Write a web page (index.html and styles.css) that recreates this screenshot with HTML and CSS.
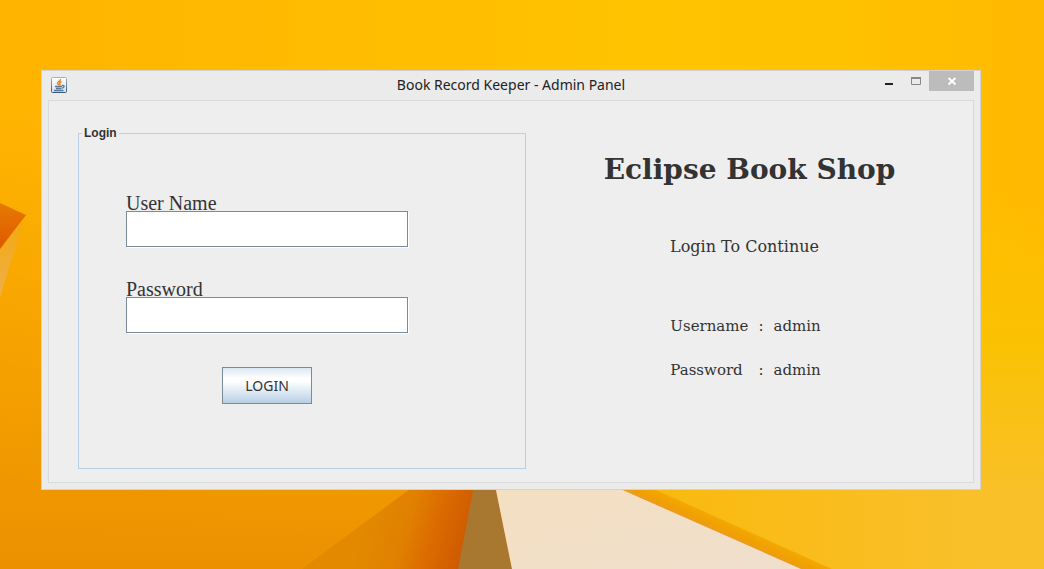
FILE: index.html
```html
<!DOCTYPE html>
<html lang="en">
<head>
<meta charset="utf-8">
<meta name="viewport" content="width=device-width, initial-scale=1">
<title>Book Record Keeper - Admin Panel</title>
<link rel="stylesheet" href="styles.css">
</head>
<body class="desktop">
<svg class="wallpaper" viewBox="0 0 1044 569" preserveAspectRatio="none" aria-hidden="true">
  <defs>
    <linearGradient id="sky" x1="0" y1="0" x2="1" y2="0">
      <stop offset="0" stop-color="#ffb400"/><stop offset=".6" stop-color="#ffc300"/>
      <stop offset=".8" stop-color="#ffc200"/><stop offset="1" stop-color="#ffb900"/>
    </linearGradient>
    <linearGradient id="shade" x1="0" y1="0" x2="0" y2="1">
      <stop offset=".2" stop-color="#ee9200" stop-opacity="0"/><stop offset="1" stop-color="#ec9000"/>
    </linearGradient>
    <linearGradient id="sand" x1="0" y1="0" x2="0" y2="1">
      <stop offset="0" stop-color="#fbc400" stop-opacity="0"/><stop offset=".4" stop-color="#fac204"/>
      <stop offset=".8" stop-color="#f9c02a"/><stop offset="1" stop-color="#f9c02b"/>
    </linearGradient>
    <linearGradient id="sandside" x1="0" y1="0" x2="1" y2="0">
      <stop offset="0" stop-color="#f9b90c"/><stop offset="1" stop-color="#f9c02b"/>
    </linearGradient>
    <linearGradient id="fold" gradientUnits="userSpaceOnUse" x1="370" y1="505" x2="470" y2="535">
      <stop offset="0" stop-color="#e28900"/><stop offset=".4" stop-color="#e08000"/>
      <stop offset=".65" stop-color="#dc6c00"/><stop offset="1" stop-color="#cd5a00"/>
    </linearGradient>
    <linearGradient id="cream" x1="0" y1="0" x2="1" y2="1">
      <stop offset="0" stop-color="#f4dfc0"/><stop offset="1" stop-color="#f0dfce"/>
    </linearGradient>
    <linearGradient id="ridge" gradientUnits="userSpaceOnUse" x1="708" y1="534" x2="717" y2="514">
      <stop offset="0" stop-color="#f0d9c3"/><stop offset=".25" stop-color="#ed9b20"/>
      <stop offset=".5" stop-color="#f0a000"/><stop offset="1" stop-color="#f5ac05"/>
    </linearGradient>
    <linearGradient id="tip" x1="0" y1="0" x2="0" y2="1">
      <stop offset="0" stop-color="#e67a00"/><stop offset="1" stop-color="#e05800"/>
    </linearGradient>
    <linearGradient id="glint" x1="0" y1="0" x2="0" y2="1">
      <stop offset="0" stop-color="#f4a80c"/><stop offset="1" stop-color="#eeb04a"/>
    </linearGradient>
  </defs>
  <rect width="1044" height="569" fill="url(#sky)"/>
  <rect width="560" height="569" fill="url(#shade)"/>
  <path d="M630 480H981V569H800Z" fill="url(#sandside)"/>
  <rect x="980" y="200" width="64" height="369" fill="url(#sand)"/>
  <path d="M422 480L302 569H460L476 480Z" fill="url(#fold)"/>
  <path d="M475 480H494L512 569H458Z" fill="#a87730"/>
  <path d="M494 480H610L814 569H512Z" fill="url(#cream)"/>
  <path d="M600 480H634L832 569H801Z" fill="url(#ridge)"/>
  <path d="M0 203L26 215L0 249Z" fill="url(#tip)"/>
  <path d="M25 217L0 250V297Z" fill="url(#glint)"/>
</svg>
<main class="window">
  <header class="titlebar">
    <svg class="app-icon" viewBox="0 0 16 16" aria-hidden="true">
      <defs><linearGradient id="tile" x1="0" y1="0" x2="0" y2="1"><stop offset="0" stop-color="#fff"/><stop offset="1" stop-color="#d5dde5"/></linearGradient>
      <linearGradient id="rim" x1="0" y1="0" x2="0" y2="1"><stop offset="0" stop-color="#9eb4c8"/><stop offset="1" stop-color="#39587a"/></linearGradient></defs>
      <rect x=".5" y=".5" width="15" height="15" rx="1" fill="url(#tile)" stroke="url(#rim)"/>
      <path d="M9.500 2C10 4 6.500 4.500 6.500 6.200C6.500 7.200 8 7.800 8 8.500M10.500 4.500C8 5.500 8.300 6.300 9 7.200C9.200 7.600 9 8 8.700 8.500" fill="none" stroke="#ee8427" stroke-width="1.400"/>
      <path d="M4 9.500H11M5 11.500H10.500M11 8.600C14 8 13.500 10.800 11 11M3 13.500H12.500" fill="none" stroke="#557a9e" stroke-width="1.300"/>
    </svg>
    <h1 class="title">Book Record Keeper - Admin Panel</h1>
    <div class="controls">
      <button class="control" type="button" aria-label="Minimize"><svg viewBox="0 0 12 12"><path d="M2 9H10" stroke="#222" stroke-width="2"/></svg></button>
      <button class="control" type="button" aria-label="Maximize"><svg viewBox="0 0 12 12"><path d="M1.500 2V9.500H10.500V2" fill="none" stroke="#888"/><path d="M1 3H11" stroke="#888" stroke-width="2"/></svg></button>
      <button class="control close" type="button" aria-label="Close"><svg viewBox="0 0 12 12"><path d="M2.500 3L9.500 9.500M9.500 3L2.500 9.500" stroke="#fff" stroke-width="1.800"/></svg></button>
    </div>
  </header>
  <div class="client">
    <form class="login">
      <fieldset class="group">
        <legend class="legend">Login</legend>
        <div class="fields">
          <div class="field">
            <label class="label" for="user">User Name</label>
            <input class="input" id="user" type="text">
          </div>
          <div class="field">
            <label class="label" for="pass">Password</label>
            <input class="input" id="pass" type="password">
          </div>
          <button class="submit" type="button">LOGIN</button>
        </div>
      </fieldset>
    </form>
    <section class="about">
      <h2 class="shop">Eclipse Book Shop</h2>
      <p class="prompt">Login To Continue</p>
      <dl class="hints">
        <dt>Username</dt><dd>:</dd><dd>admin</dd>
        <dt>Password</dt><dd>:</dd><dd>admin</dd>
      </dl>
    </section>
  </div>
</main>
</body>
</html>
```
FILE: styles.css
```css
* { box-sizing: border-box; }

.desktop {
  margin: 0;
  min-height: 100vh;
  display: flex;
  padding: 70px 63px 79px 41px;
  background: #ffb900;
  color: #333;
}

.wallpaper {
  position: absolute;
  inset: 0;
  width: 100%;
  height: 100%;
  z-index: -1;
}

.window {
  flex: 1;
  display: flex;
  flex-direction: column;
  padding: 0 6px 6px;
  background: #ebebeb;
  border: 1px solid #d2d2d2;
}

.titlebar {
  display: grid;
  grid-template-columns: 1fr auto 1fr;
  align-items: center;
  height: 29px;
  padding-bottom: 1px;
}

.app-icon {
  width: 16px;
  height: 16px;
  margin-left: 3px;
}

.title {
  margin: 0;
  font: 400 14px/20px "Noto Sans", "Open Sans", sans-serif;
  color: #222;
}

.controls {
  display: flex;
  justify-content: flex-end;
  align-self: start;
}

.control {
  display: grid;
  place-items: center;
  width: 27px;
  height: 20px;
  padding: 0;
  border: 0;
  background: none;
}

.control svg {
  width: 12px;
  height: 12px;
}

.close {
  width: 45px;
  background: #bcbcbc;
}

.client {
  flex: 1;
  display: grid;
  grid-template-columns: 477fr 447fr;
  background: #eee;
  border: 1px solid #dadada;
}

.login {
  display: flex;
  padding: 24px 0 13px 29px;
}

.group {
  flex: 1;
  min-width: 0;
  margin: 0;
  padding: 0 0 0 47px;
  border: 1px solid #b8cfe5;
}

.legend {
  margin-left: -44px;
  padding: 0 2px;
  font: 700 12px/16px "Liberation Sans", Arial, sans-serif;
}

.fields {
  display: flex;
  flex-direction: column;
  gap: 34px;
  width: 282px;
  max-width: 90%;
  padding-top: 54px;
}

.field {
  display: flex;
  flex-direction: column;
}

.label {
  font: 20px/16px "Liberation Serif", "Times New Roman", serif;
}

.input {
  width: 100%;
  height: 36px;
  padding: 0 6px;
  border: 1px solid #7a8a99;
  border-radius: 0;
  background: #fff;
  box-shadow: 1px 1px #fff;
  font: 16px/20px "Liberation Serif", serif;
}

.submit {
  align-self: center;
  width: 90px;
  height: 37px;
  padding: 0;
  border: 1px solid #7a8a99;
  background: linear-gradient(#dde8f3, #fff 30%, #fff 38%, #b8cfe5);
  color: #333;
  font: 14px/20px "Noto Sans", "Open Sans", sans-serif;
}

.about {
  display: flex;
  flex-direction: column;
  align-items: center;
  padding-top: 49px;
  font: 15px/20px "DejaVu Serif", serif;
}

.shop {
  margin: 0;
  font-size: 28px;
  line-height: 40px;
}

.prompt {
  margin: 47px 10px 0 0;
  font-size: 16px;
}

.hints {
  display: grid;
  grid-template-columns: auto auto auto;
  gap: 24px 10px;
  margin: 59px 8px 0 0;
}

.hints dd {
  margin: 0;
}
```
